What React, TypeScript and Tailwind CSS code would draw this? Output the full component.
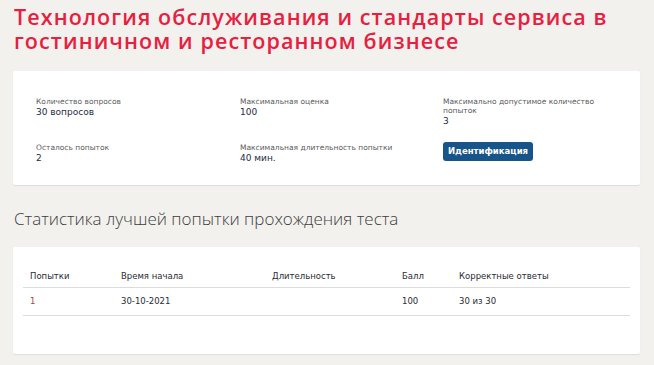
export default function App() {
  const info = [
    { label: 'Количество вопросов', value: '30 вопросов' },
    { label: 'Максимальная оценка', value: '100' },
    { label: 'Максимально допустимое количество попыток', value: '3' },
    { label: 'Осталось попыток', value: '2' },
    { label: 'Максимальная длительность попытки', value: '40 мин.' },
  ];

  return (
    <div className="min-h-[365px] bg-[#f2f1ee] px-[13px] pt-[5px] pb-4 font-['Open_Sans',sans-serif]">
      {/* заголовок */}
      <h1 className="pl-px text-[21.5px] leading-[24px] font-semibold text-[#e8203f] tracking-[1.1px]">
        <span className="block">Технология обслуживания и стандарты сервиса в</span>
        <span className="block">гостиничном и ресторанном бизнесе</span>
      </h1>

      {/* информация о тесте */}
      <div className="mt-[18px] w-[627px] h-[114px] bg-white rounded-[2px] shadow-[0_1px_1px_rgba(0,0,0,0.08)] pl-[23px] pt-[26px]">
        <div className="grid grid-cols-[204px_203px_180px] gap-y-[16px] font-['DejaVu_Sans',sans-serif]">
          {info.map((item) => (
            <div key={item.label} className="leading-[9px]">
              <div className="text-[7.5px] text-[#5a5a5a] w-[170px]">{item.label}</div>
              <div className="mt-[1px] text-[9px] leading-[11px] text-[#1d2b45]">{item.value}</div>
            </div>
          ))}
          <div className="-mt-[6px]">
            <button className="h-[19px] w-[90px] rounded-[3px] bg-[#17548a] text-white text-[8.5px] font-semibold">
              Идентификация
            </button>
          </div>
        </div>
      </div>

      {/* статистика */}
      <h2 className="mt-[24px] pl-px text-[17px] leading-[20px] font-light text-[#3d3d3d]">
        Статистика лучшей попытки прохождения теста
      </h2>

      <div className="mt-[18px] w-[627px] h-[107px] bg-white rounded-[2px] shadow-[0_1px_1px_rgba(0,0,0,0.08)] px-[10px] pt-[19px]">
        <table className="w-full border-collapse text-[8.5px] text-[#2b2b35] font-['DejaVu_Sans',sans-serif]">
          <thead>
            <tr className="border-b border-[#dcdcdc] h-[21px] text-left">
              <th className="font-normal w-[98px] pl-[7px]">Попытки</th>
              <th className="font-normal w-[151px]">Время начала</th>
              <th className="font-normal w-[130px]">Длительность</th>
              <th className="font-normal w-[57px]">Балл</th>
              <th className="font-normal">Корректные ответы</th>
            </tr>
          </thead>
          <tbody>
            <tr className="border-b border-[#dcdcdc] h-[28px]">
              <td className="pl-[7px] text-[#a04a3a]">1</td>
              <td>30-10-2021</td>
              <td></td>
              <td>100</td>
              <td>30 из 30</td>
            </tr>
          </tbody>
        </table>
      </div>
    </div>
  );
}
